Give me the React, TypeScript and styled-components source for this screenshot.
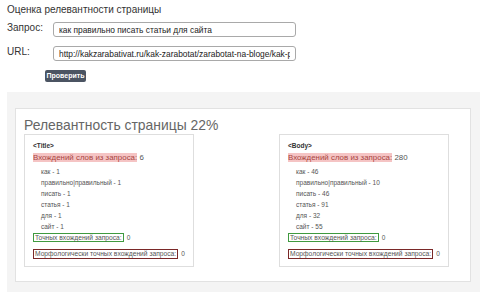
import React from "react";
import styled, { createGlobalStyle } from "styled-components";

const GlobalStyle = createGlobalStyle`
  html, body {
    margin: 0;
    padding: 0;
    background: #ffffff;
    font-family: "Liberation Sans", Arial, sans-serif;
    color: #333;
  }
  * {
    box-sizing: border-box;
  }
`;

interface WordCount {
  word: string;
  count: number;
}

interface Section {
  tag: string;
  total: number;
  words: WordCount[];
  exact: number;
  morph: number;
}

const sections: Section[] = [
  {
    tag: "<Title>",
    total: 6,
    words: [
      { word: "как", count: 1 },
      { word: "правильно|правильный", count: 1 },
      { word: "писать", count: 1 },
      { word: "статья", count: 1 },
      { word: "для", count: 1 },
      { word: "сайт", count: 1 },
    ],
    exact: 0,
    morph: 0,
  },
  {
    tag: "<Body>",
    total: 280,
    words: [
      { word: "как", count: 46 },
      { word: "правильно|правильный", count: 10 },
      { word: "писать", count: 46 },
      { word: "статья", count: 91 },
      { word: "для", count: 32 },
      { word: "сайт", count: 55 },
    ],
    exact: 0,
    morph: 0,
  },
];

function App() {
  return (
    <Page>
      <GlobalStyle />
      <Header>
        <PageTitle>Оценка релевантности страницы</PageTitle>
        <FormRow>
          <FieldLabel>Запрос:</FieldLabel>
          <TextInput readOnly value="как правильно писать статьи для сайта" />
        </FormRow>
        <FormRow>
          <FieldLabel>URL:</FieldLabel>
          <TextInput
            readOnly
            value="http://kakzarabativat.ru/kak-zarabotat/zarabotat-na-bloge/kak-pravilno-pisat-stati"
          />
        </FormRow>
        <CheckButton type="button">Проверить</CheckButton>
      </Header>

      <ResultPanel>
        <ResultCard>
          <ResultHeading>Релевантность страницы 22%</ResultHeading>
          <Columns>
            {sections.map((s) => (
              <TagBox key={s.tag}>
                <TagName>{s.tag}</TagName>
                <TotalRow>
                  <Highlight>Вхождений слов из запроса:</Highlight> {s.total}
                </TotalRow>
                <WordList>
                  {s.words.map((w) => (
                    <WordItem key={w.word}>
                      {w.word} - {w.count}
                    </WordItem>
                  ))}
                </WordList>
                <CountRow>
                  <Framed $color="#3f9a3f">Точных вхождений запроса:</Framed>
                  <span>{s.exact}</span>
                </CountRow>
                <CountRow $gap={5}>
                  <Framed $color="#7a2828" $tall>
                    Морфологически точных вхождений запроса:
                  </Framed>
                  <span>{s.morph}</span>
                </CountRow>
              </TagBox>
            ))}
          </Columns>
        </ResultCard>
      </ResultPanel>
    </Page>
  );
}

const Page = styled.div`
  width: 480px;
  height: 292px;
  overflow: hidden;
  display: flex;
  flex-direction: column;
`;

const Header = styled.div`
  padding: 4px 0 0 7px;
  display: flex;
  flex-direction: column;
  flex-shrink: 0;
`;

const PageTitle = styled.div`
  font-size: 10px;
  line-height: 12px;
  color: #333;
`;

const FormRow = styled.div`
  display: flex;
  align-items: flex-start;
  margin-top: 6px;

  & + & {
    margin-top: 9px;
  }
`;

const FieldLabel = styled.div`
  width: 46px;
  font-size: 10px;
  line-height: 12px;
  color: #333;
`;

const TextInput = styled.input`
  width: 243px;
  height: 15px;
  padding: 0 5px;
  border: 1px solid #a9a9a9;
  border-radius: 3px;
  font-family: "Liberation Sans", Arial, sans-serif;
  font-size: 8.4px;
  color: #222;
  background: #fff;
  outline: none;
`;

const CheckButton = styled.button`
  align-self: flex-start;
  margin: 9px 0 0 38px;
  width: 41px;
  height: 12px;
  padding: 0;
  border: none;
  border-radius: 2px;
  background: #4b5462;
  color: #fff;
  font-family: "Liberation Sans", Arial, sans-serif;
  font-size: 7px;
  font-weight: 700;
  line-height: 12px;
`;

const ResultPanel = styled.div`
  flex: 1 0 auto;
  margin: 10px 0 0 7px;
  padding: 16px 9px 0 8px;
  background: #f4f4f4;
`;

const ResultCard = styled.div`
  background: #fff;
  border: 1px solid #e2e2e2;
  padding: 8px 8px 14px 8px;
`;

const ResultHeading = styled.div`
  font-size: 13.9px;
  line-height: 17px;
  color: #666;
`;

const Columns = styled.div`
  display: flex;
  gap: 85px;
`;

const TagBox = styled.div`
  width: 170px;
  border: 1px solid #dedede;
  padding: 6px 8px 7px 8px;
  font-size: 6.5px;
  color: #555;
`;

const TagName = styled.div`
  font-weight: 700;
  line-height: 10px;
  color: #333;
`;

const TotalRow = styled.div`
  margin-top: 1px;
  line-height: 11px;
  font-size: 7.9px;
`;

const Highlight = styled.span`
  background: #f5c4c4;
  color: #a94442;
`;

const WordList = styled.ul`
  list-style: none;
  margin: 3px 0 0 0;
  padding: 0 0 0 8px;
`;

const WordItem = styled.li`
  line-height: 11px;
`;

const CountRow = styled.div<{ $gap?: number }>`
  margin-top: ${({ $gap }) => $gap ?? 0}px;
  height: 11px;
  display: flex;
  align-items: center;
  gap: 3px;
  line-height: 11px;
`;

const Framed = styled.span<{ $color: string; $tall?: boolean }>`
  display: block;
  border: 1.5px solid ${({ $color }) => $color};
  padding: 0 1px;
  font-size: 6.7px;
  line-height: ${({ $tall }) => ($tall ? 8 : 7)}px;
  color: #555;
`;

export default App;
